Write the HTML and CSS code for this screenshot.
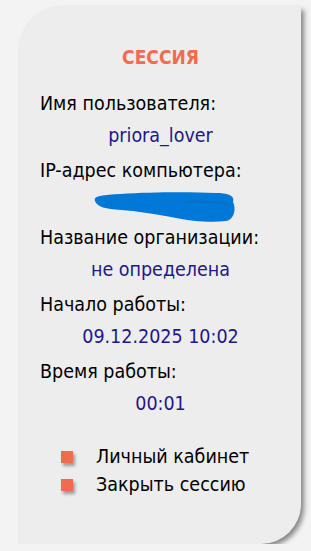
FILE: index.html
```html
<!DOCTYPE html>
<html lang="ru">
<head>
<meta charset="UTF-8" />
<meta name="viewport" content="width=device-width, initial-scale=1.0"/>
<title>Сессия</title>
<link rel="stylesheet" href="styles.css">
</head>
<body>

<div class="session-card">
  <div class="session-title">СЕССИЯ</div>

  <div class="field-label first">Имя пользователя:</div>
  <div class="field-value">priora_lover</div>

  <div class="field-label">IP-адрес компьютера:</div>
  <div class="field-value hidden-ip">
    <svg width="144" height="31" viewBox="0 0 144 31">
      <path d="M4,9 C2,4 10,3 30,2 C60,0 100,0 125,1 C138,1 144,4 142,10 C145,16 144,27 135,29 C120,31 100,29 85,26 C65,22 45,19 30,18 C15,17 6,15 4,9 Z" fill="#0078d7"/>
      <path d="M95,10 C110,9 125,10 138,12" stroke="#0a6fc6" stroke-width="2" fill="none"/>
    </svg>
  </div>

  <div class="field-label">Название организации:</div>
  <div class="field-value">не определена</div>

  <div class="field-label">Начало работы:</div>
  <div class="field-value">09.12.2025 10:02</div>

  <div class="field-label">Время работы:</div>
  <div class="field-value">00:01</div>

  <ul class="session-links">
    <li>Личный кабинет</li>
    <li>Закрыть сессию</li>
  </ul>
</div>

</body>
</html>
```

FILE: styles.css
```css
* { margin: 0; padding: 0; box-sizing: border-box; }
body {
  background: #f3f3f3;
  font-family: 'DejaVu Sans Condensed', 'DejaVu Sans', sans-serif;
  font-size: 19.5px;
  color: #000;
}
.session-card {
  margin: 7px 10px 0 20px;
  width: 281px;
  height: 537px;
  background: #ededed;
  border-radius: 40px 0 40px 0;
  box-shadow: 3px 3px 5px rgba(0,0,0,0.45);
  padding: 39px 0 0 20px;
}
.session-title {
  font-size: 19px;
  font-weight: bold;
  line-height: 22px;
  color: #f26b4f;
  text-align: center;
  margin-left: -20px;
}
.field-label {
  line-height: 22px;
  margin-top: 13px;
}
.field-label.first { margin-top: 25px; }
.field-value {
  line-height: 22px;
  margin-top: 10px;
  margin-left: -20px;
  text-align: center;
  color: #1d178c;
}
.hidden-ip {
  margin-top: 10px;
  margin-bottom: -9px;
  height: 31px;
}
.hidden-ip svg {
  display: block;
  margin: 0 auto;
  position: relative;
  left: 2px;
}
.session-links {
  list-style: none;
  margin-top: 28px;
  padding-left: 21px;
}
.session-links li {
  display: flex;
  align-items: center;
  line-height: 28px;
}
.session-links li::before {
  content: "";
  width: 12px;
  height: 12px;
  background: #f26b4f;
  box-shadow: 2px 3px 3px rgba(0,0,0,0.35);
  margin-right: 23px;
}
```
